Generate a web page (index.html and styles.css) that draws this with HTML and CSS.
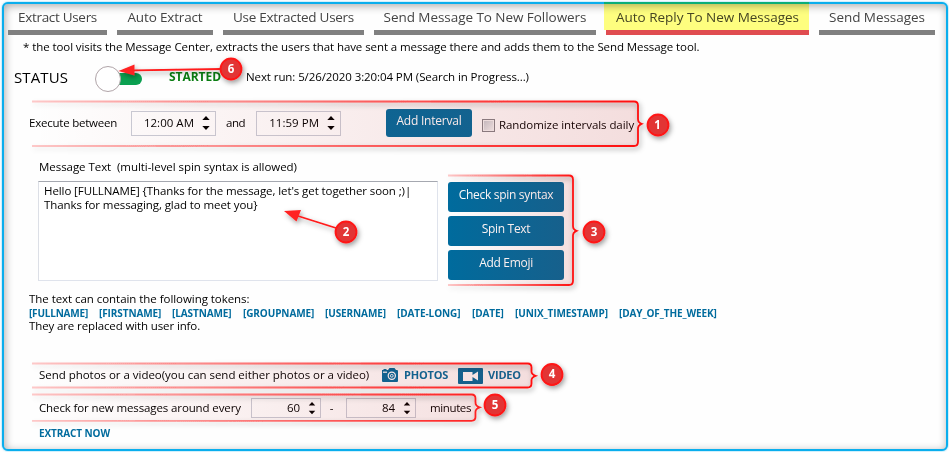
FILE: index.html
```html
<!DOCTYPE html>
<html lang="en">
<head>
<meta charset="utf-8">
<title>Auto Reply To New Messages</title>
<link rel="stylesheet" href="styles.css">
</head>
<body>
<main class="panel">
  <nav class="tabs">
    <a class="tab t1">Extract Users</a>
    <a class="tab t2">Auto Extract</a>
    <a class="tab t3">Use Extracted Users</a>
    <a class="tab t4">Send Message To New Followers</a>
    <a class="tab t5 active">Auto Reply To New Messages</a>
    <a class="tab t6">Send Messages</a>
  </nav>
  <p class="note">* the tool visits the Message Center, extracts the users that have sent a message there and adds them to the Send Message tool.</p>
  <div class="row status">
    <span class="status-label">STATUS</span>
    <span class="toggle"><span class="knob"></span></span>
    <span class="started">STARTED</span>
    <span class="next">Next run: 5/26/2020 3:20:04 PM (Search in Progress...)</span>
  </div>
  <div class="row interval">
    <span class="lbl-exec">Execute between</span>
    <span class="spin time">12:00 AM<svg class="arrows" viewBox="0 0 8 16"><path d="M.3 5 4 1 7.7 5zM.3 11 4 15 7.7 11z"/></svg></span>
    <span class="lbl-and">and</span>
    <span class="spin time">11:59 PM<svg class="arrows" viewBox="0 0 8 16"><path d="M.3 5 4 1 7.7 5zM.3 11 4 15 7.7 11z"/></svg></span>
    <button class="btn add">Add Interval</button>
    <span class="check"></span>
    <span class="lbl-random">Randomize intervals daily</span>
  </div>
  <p class="msg-label">Message Text &nbsp;(multi-level spin syntax is allowed)</p>
  <div class="message">
    <div class="textarea">Hello [FULLNAME] {Thanks for the message, let's get together soon ;)|<br>Thanks for messaging, glad to meet you}</div>
    <div class="buttons">
      <button class="btn">Check spin syntax</button>
      <button class="btn">Spin Text</button>
      <button class="btn">Add Emoji</button>
    </div>
  </div>
  <p class="tokens-intro">The text can contain the following tokens:</p>
  <div class="tokens">
    <span class="tight">[FULLNAME]</span><span>[FIRSTNAME]</span><span>[LASTNAME]</span><span>[GROUPNAME]</span><span>[USERNAME]</span><span>[DATE-LONG]</span><span>[DATE]</span><span>[UNIX_TIMESTAMP]</span><span>[DAY_OF_THE_WEEK]</span>
  </div>
  <p class="tokens-outro">They are replaced with user info.</p>
  <div class="row media">
    <span class="lbl-media">Send photos or a video(you can send either photos or a video)</span>
    <svg class="camera" viewBox="0 0 16 14"><path fill="#006b9d" d="M0 3.5V2h1.500V1h3v1H6l1.500-2h5l1.500 2h1q1 0 1 1v10q0 1-1 1H1q-1 0-1-1z"/><circle cx="9.800" cy="7.800" r="3.600" fill="none" stroke="#fff" stroke-width="1.200"/><circle cx="9.800" cy="7.800" r="1.400" fill="none" stroke="#fff" stroke-width=".9"/><path fill="#fff" d="M1 3.600h4v1.200H1z"/></svg>
    <span class="link photos">PHOTOS</span>
    <svg class="camcorder" viewBox="0 0 25 16"><rect width="25" height="16" rx="1" fill="#006b9d"/><path fill="#fff" d="M5 4h9.500v3L20 3.500v9L14.500 9v4H5z"/></svg>
    <span class="link video">VIDEO</span>
  </div>
  <div class="row frequency">
    <span class="lbl-freq">Check for new messages around every</span>
    <span class="spin num">60<svg class="arrows" viewBox="0 0 8 16"><path d="M.3 5 4 1 7.7 5zM.3 11 4 15 7.7 11z"/></svg></span>
    <span class="dash">-</span>
    <span class="spin num">84<svg class="arrows" viewBox="0 0 8 16"><path d="M.3 5 4 1 7.7 5zM.3 11 4 15 7.7 11z"/></svg></span>
    <span class="lbl-min">minutes</span>
  </div>
  <a class="link extract">EXTRACT NOW</a>
</main>
<div class="highlight"></div>
<svg class="callouts" viewBox="0 0 949 452">
  <defs>
    <linearGradient id="s1" gradientUnits="userSpaceOnUse" x1="32" y1="0" x2="642" y2="0"><stop offset="0" stop-color="#ff1010" stop-opacity=".2"/><stop offset=".5" stop-color="#ff1010" stop-opacity=".6"/><stop offset="1" stop-color="#ff1010"/></linearGradient>
    <linearGradient id="f1" gradientUnits="userSpaceOnUse" x1="32" y1="0" x2="642" y2="0"><stop offset="0" stop-color="#b41414" stop-opacity="0"/><stop offset="1" stop-color="#b41414" stop-opacity=".14"/></linearGradient>
    <linearGradient id="s3" gradientUnits="userSpaceOnUse" x1="448" y1="0" x2="577" y2="0"><stop offset="0" stop-color="#ff1010" stop-opacity=".2"/><stop offset="1" stop-color="#ff1010"/></linearGradient>
    <linearGradient id="f3" gradientUnits="userSpaceOnUse" x1="448" y1="0" x2="577" y2="0"><stop offset="0" stop-color="#b41414" stop-opacity="0"/><stop offset="1" stop-color="#b41414" stop-opacity=".14"/></linearGradient>
    <linearGradient id="s4" gradientUnits="userSpaceOnUse" x1="32" y1="0" x2="536" y2="0"><stop offset="0" stop-color="#ff1010" stop-opacity=".2"/><stop offset="1" stop-color="#ff1010"/></linearGradient>
    <linearGradient id="f4" gradientUnits="userSpaceOnUse" x1="32" y1="0" x2="536" y2="0"><stop offset="0" stop-color="#b41414" stop-opacity="0"/><stop offset="1" stop-color="#b41414" stop-opacity=".14"/></linearGradient>
    <filter id="sh" filterUnits="userSpaceOnUse" x="0" y="0" width="949" height="452"><feDropShadow dx="1.5" dy="2.5" stdDeviation="2.5" flood-color="#000" flood-opacity=".38"/></filter>
  </defs>
  <path fill="url(#f1)" d="M32 101.500H634q4 0 4 4V142q0 4-4 4H32z"/>
  <path fill="url(#f3)" d="M448 175.500H569q4 0 4 4V281q0 4-4 4H448z"/>
  <path fill="url(#f4)" d="M32 363.500H527.500q4 0 4 4v16q0 4-4 4H32z"/>
  <path fill="url(#f4)" d="M32 394.500H471.500q4 0 4 4v18q0 4-4 4H32z"/>
  <g filter="url(#sh)" fill="none" stroke-width="1.800">
    <path stroke="url(#s1)" d="M32 101.500H634q4 0 4 4V119q0 3.500 3.500 4.800-3.500 1.500-3.500 4.500v13.700q0 4-4 4H32"/>
    <path stroke="url(#s3)" d="M448 175.500H569q4 0 4 4V226q0 3.500 3.500 4.800-3.500 1.500-3.500 4.500v45.700q0 4-4 4H448"/>
    <path stroke="url(#s4)" d="M32 363.500H527.500q4 0 4 4v4q0 3 4 4.300-4 1.500-4 4.500v3.200q0 4-4 4H32"/>
    <path stroke="url(#s4)" d="M32 394.500H471.500q4 0 4 4v4q0 3.500 4 4.800-4 1.500-4 4.500v5q0 4-4 4H32"/>
  </g>
  <g filter="url(#sh)" stroke="#ff1a1a" stroke-width="1.800" fill="#f22">
    <path d="M222 69 134 70.300"/><path stroke="none" d="M118.500 71 134.500 64.500V75.500z"/>
    <path d="M336 228 298 216"/><path stroke="none" d="M284 211 301 210 296.500 221.500z"/>
  </g>
  <g filter="url(#sh)" fill="#e23636" stroke="#ff1414" stroke-width="1.800">
    <circle cx="231" cy="69" r="10.500"/><circle cx="658" cy="125" r="10.500"/><circle cx="346" cy="232" r="10.500"/><circle cx="594" cy="232" r="10.500"/><circle cx="552" cy="374.500" r="10.500"/><circle cx="495" cy="405" r="10.500"/>
  </g>
  <g class="digits"><text x="231" y="73">6</text><text x="657.500" y="129">1</text><text x="346" y="236">2</text><text x="594" y="236">3</text><text x="552" y="378">4</text><text x="495" y="409">5</text></g>
</svg>
</body>
</html>
```
FILE: styles.css
```css
* { box-sizing: border-box; }
body {
  margin: 0; width: 949px; height: 452px; overflow: hidden; background: #fff;
  position: relative; font: 11.5px/14px "Open Sans", sans-serif; color: #000;
  white-space: nowrap; letter-spacing: -.05px;
}
p { margin: 0; }
.panel {
  position: relative; width: 946px; height: 449px; margin: 2px 0 0 2px; background: #fefefe;
  border: 2px solid #0aaeed; border-radius: 6px;
  box-shadow: inset 1px 2px 9px rgba(0,0,0,.33), 0 0 2px rgba(10,174,237,.7);
}
.tabs { display: flex; gap: 10px; padding: 1px 0 0 4px; }
.tab {
  height: 30px; padding-top: 2px; border-bottom: 5px solid #808080;
  font-size: 13.5px; line-height: 20px; text-align: center; color: #444;
}
.t1 { width: 99px; letter-spacing: -.31px; }
.t2 { width: 96px; letter-spacing: -.16px; }
.t3 { width: 141px; letter-spacing: -.27px; }
.t4 { width: 222px; }
.t5 { width: 203px; letter-spacing: -.01px; }
.t6 { width: 116px; }
.active { border-color: #e04c50; }
.note { margin-left: 19px; line-height: 24px; height: 22px; letter-spacing: -.08px; }
.row { display: flex; align-items: center; }
.row > * { flex: none; }

.status { height: 43px; padding-left: 10px; }
.status-label { width: 83px; font-size: 15px; letter-spacing: .1px; padding-bottom: 3px; }
.toggle { position: relative; width: 45px; height: 12px; border-radius: 6px; background: #0aa050; }
.knob {
  position: absolute; left: -2px; top: -7px; width: 26px; height: 26px;
  border: 1px solid #b0a4a8; border-radius: 50%; background: #fff;
}
.started { width: 77px; margin-left: 27px; padding-bottom: 3px; font-size: 12px; font-weight: bold; color: #0a7d12; letter-spacing: -.04px; }
.next { padding-bottom: 3px; letter-spacing: -.09px; }

.interval { height: 47px; padding-left: 25px; }
.lbl-exec { width: 102px; letter-spacing: -.23px; padding-bottom: 2px; }
.spin {
  display: flex; align-items: center; justify-content: flex-end;
  border: 1px solid #c9ccd6; padding-right: 5px;
}
.time { width: 85px; height: 25px; padding-bottom: 1px; letter-spacing: .02px; }
.arrows { width: 8px; height: 16px; margin-left: 8px; }
.lbl-and { width: 30px; padding: 0 0 2px 10px; margin-right: 10px; letter-spacing: -.45px; }
.btn {
  display: block; border: 0; border-radius: 3px; padding: 0 0 4px; background: #006b9d; color: #fff;
  font: 12px/14px "Open Sans", sans-serif; letter-spacing: -.3px;
}
.add { width: 86px; height: 28px; margin: 0 0 1px 45px; letter-spacing: -.23px; }
.check {
  width: 13px; height: 13px; margin: 4px 4px 0 10px; border: 1px solid #85858a;
  background: linear-gradient(135deg, #c4c8ce, #f6f6f6); box-shadow: inset 0 0 0 1px #f4f4f4;
}
.lbl-random { padding-top: 3px; letter-spacing: -.06px; }

.msg-label { margin: 13px 0 0 35px; height: 14px; }
.message { display: flex; gap: 10px; margin: 7px 0 0 34px; }
.textarea {
  width: 400px; height: 100px; padding: 2px 5px; letter-spacing: -.09px;
  border: 1px solid #dfe3ec; border-top-color: #a5a8b0; border-left-color: #dcdfe6; background: #fff;
}
.buttons { display: flex; flex-direction: column; gap: 4px; padding-top: 1px; }
.buttons .btn { width: 116px; height: 30px; }

.tokens-intro { margin: 11px 0 0 25px; }
.tokens {
  display: grid; grid-template-columns: 59px 62px 60px 71px 61px 64px 32px 93px 98px; column-gap: 11px;
  margin-left: 25px; height: 13px; font-size: 10px; font-weight: bold; letter-spacing: -.1px; color: #006b9d;
}
.tight { letter-spacing: -.2px; }
.tokens-outro { margin-left: 25px; height: 14px; letter-spacing: -.12px; }

.media { height: 24px; margin-top: 30px; padding-left: 35px; }
.lbl-media { width: 343px; letter-spacing: -.03px; }
.link { font-size: 11px; font-weight: bold; color: #006b9d; letter-spacing: -.2px; }
.camera { width: 16px; height: 14px; }
.photos { width: 54px; margin-left: 6px; }
.camcorder { width: 25px; height: 16px; margin-top: 2px; }
.video { margin-left: 5px; }
.frequency { height: 26px; margin-top: 7px; padding-left: 35px; }
.frequency > * { margin-top: 1px; }
.lbl-freq { width: 212px; letter-spacing: -.12px; }
.num { width: 70px; height: 20px; padding-right: 4px; }
.num .arrows { height: 14px; }
.dash { width: 25px; text-align: center; padding-right: 4px; }
.lbl-min { margin-left: 14px; letter-spacing: -.38px; }
.extract { display: block; margin: 6px 0 0 35px; font-size: 10px; letter-spacing: -.1px; }

.highlight { position: absolute; left: 604px; top: 2px; width: 205px; height: 28px; background: #ffff80; mix-blend-mode: multiply; }
.callouts { position: absolute; left: 0; top: 0; width: 949px; height: 452px; pointer-events: none; }
.digits { font: bold 11.5px "Open Sans", sans-serif; fill: #fff; text-anchor: middle; }
```
